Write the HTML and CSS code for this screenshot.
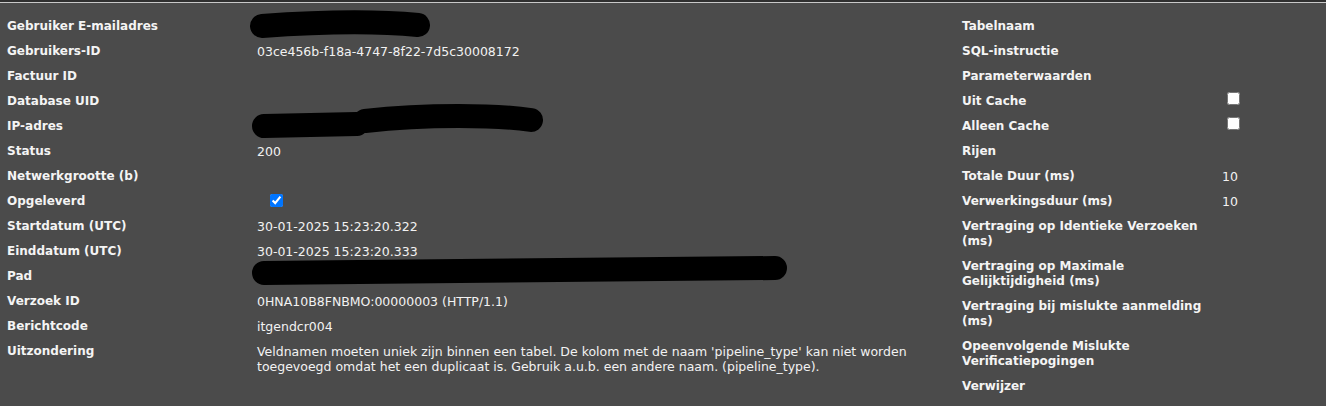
FILE: index.html
```html
<!DOCTYPE html>
<html lang="nl">
<head>
    <meta charset="UTF-8">
    <meta name="viewport" content="width=device-width, initial-scale=1.0">
    <title>Verzoekdetails</title>
    <link rel="stylesheet" href="styles.css">
</head>
<body>
    <div class="details">
        <table class="info info-main">
            <tr><td class="label">Gebruiker E-mailadres</td><td class="value"><svg class="redact" width="1" height="15"><path d="M5,7 C60,3 120,2 161,6" /></svg></td></tr>
            <tr><td class="label">Gebruikers-ID</td><td class="value">03ce456b-f18a-4747-8f22-7d5c30008172</td></tr>
            <tr><td class="label">Factuur ID</td><td class="value"></td></tr>
            <tr><td class="label">Database UID</td><td class="value"></td></tr>
            <tr><td class="label">IP-adres</td><td class="value"><svg class="redact" width="1" height="15"><path d="M7,7 L100,5" stroke-width="26" /><path d="M108,2 C170,-5 240,-4 274,1" stroke-width="32" /></svg></td></tr>
            <tr><td class="label">Status</td><td class="value">200</td></tr>
            <tr><td class="label">Netwerkgrootte (b)</td><td class="value"></td></tr>
            <tr><td class="label">Opgeleverd</td><td class="value"><input type="checkbox" class="check check-main" checked></td></tr>
            <tr><td class="label">Startdatum (UTC)</td><td class="value">30-01-2025 15:23:20.322</td></tr>
            <tr><td class="label">Einddatum (UTC)</td><td class="value">30-01-2025 15:23:20.333</td></tr>
            <tr><td class="label">Pad</td><td class="value"><svg class="redact" width="1" height="15"><path d="M7,4 C200,2 400,1 518,-1" stroke-width="22" /></svg></td></tr>
            <tr><td class="label">Verzoek ID</td><td class="value">0HNA10B8FNBMO:00000003 (HTTP/1.1)</td></tr>
            <tr><td class="label">Berichtcode</td><td class="value">itgendcr004</td></tr>
            <tr><td class="label">Uitzondering</td><td class="value">Veldnamen moeten uniek zijn binnen een tabel. De kolom met de naam 'pipeline_type' kan niet worden toegevoegd omdat het een duplicaat is. Gebruik a.u.b. een andere naam. (pipeline_type).</td></tr>
        </table>
        <table class="info info-side">
            <tr><td class="label">Tabelnaam</td><td class="value"></td></tr>
            <tr><td class="label">SQL-instructie</td><td class="value"></td></tr>
            <tr><td class="label">Parameterwaarden</td><td class="value"></td></tr>
            <tr><td class="label">Uit Cache</td><td class="value"><input type="checkbox" class="check"></td></tr>
            <tr><td class="label">Alleen Cache</td><td class="value"><input type="checkbox" class="check"></td></tr>
            <tr><td class="label">Rijen</td><td class="value"></td></tr>
            <tr><td class="label">Totale Duur (ms)</td><td class="value">10</td></tr>
            <tr><td class="label">Verwerkingsduur (ms)</td><td class="value">10</td></tr>
            <tr><td class="label">Vertraging op Identieke Verzoeken (ms)</td><td class="value"></td></tr>
            <tr><td class="label">Vertraging op Maximale Gelijktijdigheid (ms)</td><td class="value"></td></tr>
            <tr><td class="label">Vertraging bij mislukte aanmelding (ms)</td><td class="value"></td></tr>
            <tr><td class="label">Opeenvolgende Mislukte Verificatiepogingen</td><td class="value"></td></tr>
            <tr><td class="label">Verwijzer</td><td class="value"></td></tr>
        </table>
    </div>
</body>
</html>
```

FILE: styles.css
```css
html, body {
    margin: 0;
    padding: 0;
    height: 100%;
    background-color: #4b4b4b;
    overflow: hidden;
}
body {
    font-family: "DejaVu Sans", Verdana, sans-serif;
    font-size: 12.5px;
    line-height: 15px;
    color: #f2f2f2;
    border-top: 2px solid #2f2f2f;
}
.details {
    display: flex;
    border-top: 1px solid #c8c8c8;
    padding-top: 11px;
}
.info {
    border-collapse: collapse;
    align-self: flex-start;
}
.info td {
    padding: 5px 7px;
    vertical-align: top;
}
.info .label {
    font-weight: bold;
    font-size: 12px;
    color: #f4f4f4;
}
.info-main {
    width: 955px;
    flex: 0 0 955px;
}
.info-main .label {
    width: 236px;
}
.info-main .value {
    padding-right: 36px;
}
.info-side {
    flex: 1;
}
.info-side .label {
    width: 246px;
}
.redact {
    display: block;
    overflow: visible;
}
.redact path {
    fill: none;
    stroke: #000;
    stroke-width: 24;
    stroke-linecap: round;
}
.check {
    display: block;
    width: 13px;
    height: 13px;
    margin: -2px 0 0 5px;
}
.check-main {
    margin: 0 0 0 13px;
}
```
